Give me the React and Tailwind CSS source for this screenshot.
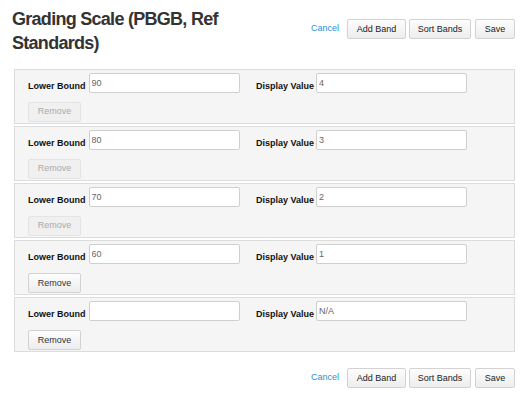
const bands = [
  { lower: "90", display: "4", disabled: true },
  { lower: "80", display: "3", disabled: true },
  { lower: "70", display: "2", disabled: true },
  { lower: "60", display: "1", disabled: false },
  { lower: "", display: "N/A", disabled: false },
];

const btn =
  "h-[20px] rounded-[2px] border border-[#d2d2d2] bg-gradient-to-b from-[#fdfdfd] to-[#ededed] text-[9px] text-[#222] leading-none";

const Actions = () => (
  <div className="flex items-center">
    <a className="text-[9px] text-[#2b8fd6] mr-[8px]">Cancel</a>
    <button className={`${btn} w-[59px]`}>Add Band</button>
    <button className={`${btn} w-[62px] ml-[3px]`}>Sort Bands</button>
    <button className={`${btn} w-[40px] ml-[4px]`}>Save</button>
  </div>
);

const Field = ({ label, value, gap }) => (
  <div className="flex items-start">
    <label className="text-[9px] font-bold text-[#111] leading-[20px] mt-[3px]">
      {label}
    </label>
    <input
      readOnly
      value={value}
      className={`${gap} w-[151px] h-[20px] rounded-[2px] border border-[#cfcfcf] bg-white px-[2px] text-[9px] text-[#666] outline-none`}
    />
  </div>
);

export default function App() {
  return (
    <div
      className="w-[532px] h-[399px] bg-white text-[#333]"
      style={{ fontFamily: '"Liberation Sans", Arial, sans-serif' }}
    >
      {/* Header */}
      <div className="flex justify-between items-start pl-[12px] pr-[17px] pt-[7px]">
        <h1 className="w-[260px] text-[18px] font-bold leading-[24px] tracking-[-0.04em] text-[#333]">
          Grading Scale (PBGB, Ref Standards)
        </h1>
        <div className="mt-[12px]">
          <Actions />
        </div>
      </div>

      {/* Bands */}
      <div className="mt-[14px] mx-[14px] w-[501px] flex flex-col gap-[2px]">
        {bands.map((b, i) => (
          <div
            key={i}
            className="h-[55px] border border-[#dcdcdc] bg-[#f5f5f5] pl-[13px] pt-[3px]"
          >
            <div className="flex">
              <div className="w-[228px]">
                <Field label="Lower Bound" value={b.lower} gap="ml-[3px]" />
              </div>
              <Field label="Display Value" value={b.display} gap="ml-[2px]" />
            </div>
            <button
              disabled={b.disabled}
              className={
                b.disabled
                  ? "mt-[6px] w-[53px] h-[20px] rounded-[2px] border border-[#e4e4e4] bg-[#f0f0f0] text-[9px] text-[#aaa]"
                  : `mt-[6px] w-[53px] ${btn} text-[#333]`
              }
            >
              Remove
            </button>
          </div>
        ))}
      </div>

      {/* Footer */}
      <div className="flex justify-end pr-[17px] mt-[16px]">
        <Actions />
      </div>
    </div>
  );
}
